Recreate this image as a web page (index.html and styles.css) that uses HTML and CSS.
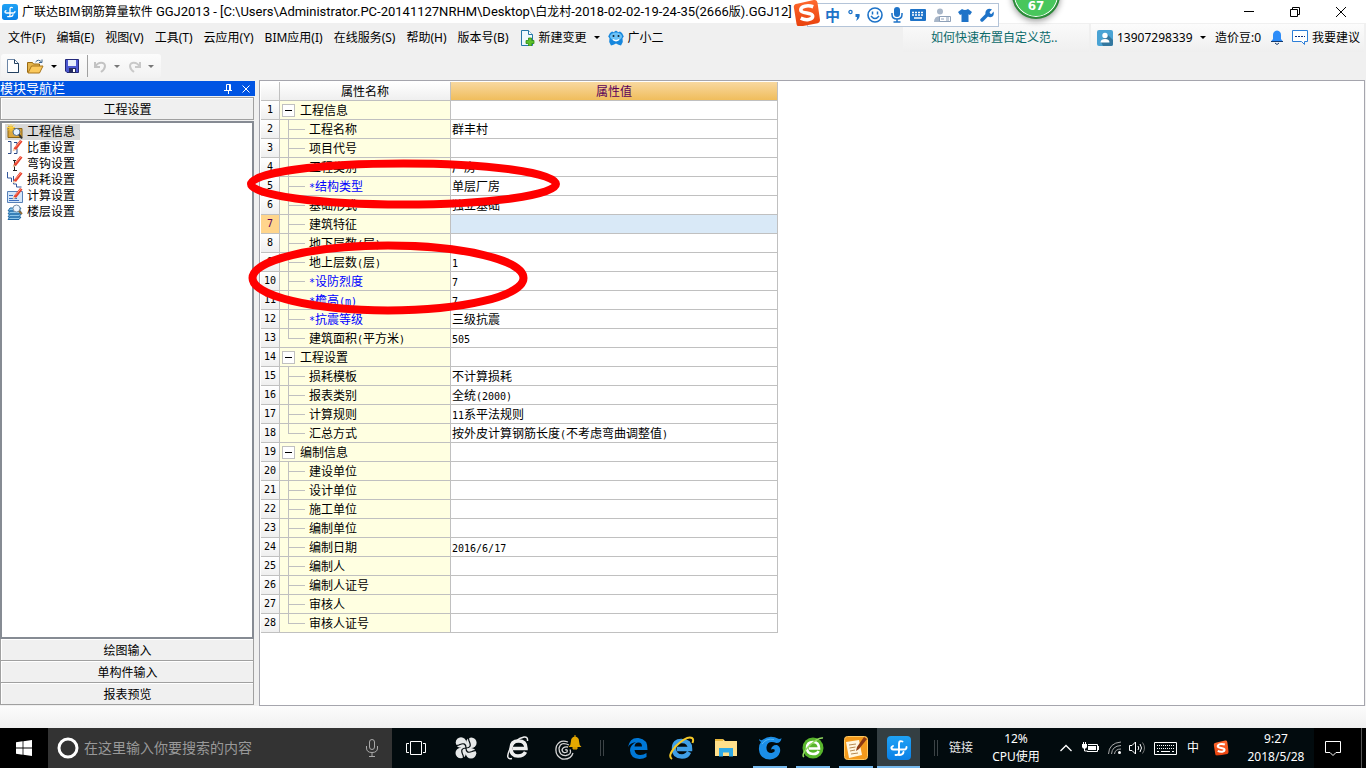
FILE: index.html
```
<!DOCTYPE html>
<html lang="zh-CN">
<head>
<meta charset="utf-8">
<title>广联达BIM钢筋算量软件 GGJ2013</title>
<link rel="stylesheet" href="styles.css">
</head>
<body>
<svg class="defs" width="0" height="0" aria-hidden="true">
  <defs>
    <linearGradient id="blueTile" x1="0" y1="0" x2="0" y2="1"><stop offset="0" stop-color="#1fa2f5"/><stop offset="1" stop-color="#0a80e6"/></linearGradient>
    <linearGradient id="sogou" x1="0" y1="0" x2="0" y2="1"><stop offset="0" stop-color="#ff6a30"/><stop offset="1" stop-color="#e8400c"/></linearGradient>
    <symbol id="ggj" viewBox="0 0 24 24">
      <rect width="24" height="24" rx="4" fill="url(#blueTile)"/>
      <path d="M15.500 5.500Q12 4 12 8v8q0 3.500-3.500 3M6 10q-2 1-1.500 2.500.5 1 2 1h11q2 0 2-2.500M12 19q4 0 4.500-3" fill="none" stroke="#fff" stroke-width="1.900" stroke-linecap="round"/>
    </symbol>
    <symbol id="sg" viewBox="0 0 26 26">
      <path d="M4 4.500 20 1q3-.5 3.600 2.400L26 20q.3 2.800-2.300 3.500L7 26.500Q4 27 3.400 24L.8 8Q.4 5 4 4.500z" fill="url(#sogou)"/>
      <path d="M19.500 7.500C14 5.500 7.500 7 7.500 10.500c0 4 11.500 2 11.500 6 0 3.500-6.500 4.500-11.500 2" fill="none" stroke="#fff" stroke-width="3.400"/>
    </symbol>
    <symbol id="pencil" viewBox="0 0 16 16"><path d="M6.500 8.500 13 0l2.500 1.500L9 10z" fill="#e8402c"/><path d="m8.300 7.300 5.500-6.500" stroke="#ff9a80"/><path d="m6.500 8.500-1 3L9 10z" fill="#f2c9a0"/></symbol>
  </defs>
</svg>

<header class="titlebar">
  <svg class="i16" viewBox="0 0 24 24"><use href="#ggj"/></svg>
  <h1 class="title">广联达BIM钢筋算量软件 <span>GGJ2013 - [C:\Users\Administrator.PC-20141127NRHM\Desktop\</span>白龙村<span>-2018-02-02-19-24-35(2666</span>版<span>).GGJ12]</span></h1>
  <div class="winbtns">
    <button aria-label="最小化"><svg width="12" height="12"><path d="M1 5.500h10" stroke="#000"/></svg></button>
    <button aria-label="还原"><svg width="12" height="12"><path d="M1.500 3.500h7v7h-7zM3.500 3.500v-2h7v7h-2" fill="none" stroke="#000"/></svg></button>
    <button aria-label="关闭"><svg width="12" height="12"><path d="m1 1 10 10M11 1 1 11" stroke="#000"/></svg></button>
  </div>
</header>

<nav class="menubar">
  <button>文件(F)</button><button>编辑(E)</button><button>视图(V)</button><button>工具(T)</button><button>云应用(Y)</button><button>BIM应用(I)</button><button>在线服务(S)</button><button>帮助(H)</button><button>版本号(B)</button>
  <button class="withicon"><svg width="15" height="16" viewBox="0 0 15 16"><path d="M1.500.5h7l4 4v11h-11z" fill="#eef8fd" stroke="#2477a8"/><path d="M8.500.5v4h4" fill="#fff" stroke="#2477a8"/><path d="M8.500 8h3v2.500H14v3h-2.500V16h-3v-2.500H6v-3h2.500z" fill="#5cc02a" stroke="#2f8a10" stroke-width=".8"/></svg><span>新建变更</span><i class="caret"></i></button>
  <button class="withicon"><svg width="16" height="16" viewBox="0 0 16 16"><path d="M2 3 4 1.500l2 .7Q8-.5 10 2.200l2-.7L14 3l1.800 3.500-1.300 1.800.3 3.700-1.800 3.500-2.500-.8-2.500-1.200-2.500 1.200-2.500.8L1.200 12l.3-3.700L.2 6.500z" fill="#1787dd"/><ellipse cx="8" cy="6.500" rx="6" ry="4" fill="#6cc2f6"/><circle cx="5.500" cy="6" r="1" fill="#123"/><circle cx="10.500" cy="6" r="1" fill="#123"/><path d="M5 9.500q3 2.500 6 0" stroke="#fff" stroke-width="1.300" fill="none"/></svg><span>广小二</span></button>
  <a class="tip" href="#">如何快速布置自定义范..</a>
  <div class="account">
    <button class="user"><svg width="16" height="16" viewBox="0 0 16 16"><rect width="16" height="16" rx="2" fill="#4aa3d4"/><path d="m10 4 6 6v4q0 2-2 2H6l-2-4z" fill="#34789f"/><circle cx="8" cy="5.500" r="2.700" fill="#fff"/><path d="M3.500 12.500q0-3.500 4.500-3.500t4.500 3.500z" fill="#fff"/></svg><span>13907298339</span><i class="caret"></i></button>
    <span>造价豆:0</span>
    <button class="bell" aria-label="通知"><svg width="12" height="15" viewBox="0 0 12 15"><path d="M0 11.500 2 9V5q0-4 4-4.500 4 .5 4 4.500v4l2 2.500z" fill="#2d8cf8"/><path d="M0 11.500h12M4 13l2 1.500L8 13" fill="none" stroke="#123a70"/></svg></button>
    <button class="suggest"><svg width="16" height="16" viewBox="0 0 16 16"><path d="M.5.500h15v11h-3v3l-3-3h-9z" fill="#fff" stroke="#2d7fd8"/><path d="M3 6.500h10" stroke="#0a2f80" stroke-dasharray="2 1"/></svg><span>我要建议</span></button>
  </div>
</nav>

<div class="toolbar">
  <div class="tools">
    <button aria-label="新建"><svg width="12" height="14" viewBox="0 0 12 14"><path d="M.5.5h7l4 4v9H.5z" fill="#fff" stroke="#6c86a6"/><path d="M7.500.5v4h4v9H.5" fill="none" stroke="#23405f"/></svg></button>
    <button class="open" aria-label="打开"><svg width="17" height="15" viewBox="0 0 17 15"><path d="M.5 13.500v-10h5l1 1.500h6v3" fill="#e5b54c" stroke="#9a6a12"/><path d="m1 14 3.500-7H16l-3.500 7z" fill="#fbc95c" stroke="#a8741a"/><path d="M8.500 3q3-3.500 6 0M15 .5v3h-3" fill="none" stroke="#3d6690"/></svg><i class="caret"></i></button>
    <button aria-label="保存"><svg width="14" height="14" viewBox="0 0 14 14"><path d="M.5.5h13v13H2l-1.500-1.500z" fill="#4c58d0" stroke="#23287a"/><path d="M3 1h8v6H3z" fill="#e8effc"/><path d="M4 9h7v5H4z" fill="#242a60"/><path d="M8 10h2v3H8z" fill="#fff"/></svg></button>
    <span class="rule"></span>
    <button disabled aria-label="撤销"><svg width="13" height="13" viewBox="0 0 13 13"><path d="M1 2v5h5M1.500 6.500C4 1.500 11 1.500 11 6q0 3-4 6" fill="none" stroke="#c3c3c3" stroke-width="2"/></svg><i class="caret dim"></i></button>
    <button disabled aria-label="恢复"><svg width="13" height="13" viewBox="0 0 13 13"><path d="M12 2v5H7M11.500 6.500C9 1.500 2 1.500 2 6q0 3 4 6" fill="none" stroke="#c9c9c9" stroke-width="2"/></svg><i class="caret dim"></i></button>
  </div>
</div>

<main class="work">
  <aside class="side">
    <div class="sidehead"><h2>模块导航栏</h2>
      <button aria-label="固定"><svg width="8" height="10"><path d="M2.500 6V.5h4V6M5.500 1v5M0 6.500h8M4.500 7v3" stroke="#fff" fill="none"/></svg></button>
      <button aria-label="关闭"><svg width="8" height="8"><path d="m.5.5 7 7M7.500.5l-7 7" stroke="#fff"/></svg></button>
    </div>
    <button class="group">工程设置</button>
    <div class="modules">
      <button class="mod on"><svg viewBox="0 0 16 16"><path d="M1 13.500V3h5l1 1.500h8v9z" fill="#dca63c" stroke="#8a6414"/><circle cx="9.500" cy="8" r="3.500" fill="#e8f3ff" stroke="#4d6b8c"/><path d="m12 10.500 3 4" stroke="#333" stroke-width="2"/><path d="M4-.5v8M0 3.500h8M1 .5l6 6M7 .5l-6 6" stroke="#ffd23c"/></svg><span>工程信息</span></button>
      <button class="mod"><svg viewBox="0 0 16 16"><path d="M1 1.500h3v12H1M7 2.500h3v5M7 13.500h3v-5" fill="none" stroke="#2c4a86"/><use href="#pencil"/></svg><span>比重设置</span></button>
      <button class="mod"><svg viewBox="0 0 16 16"><path d="M6 4.500h3M7.500 4.500v10M6 14.500h4M6 9.500h3" fill="none" stroke="#222"/><use href="#pencil"/></svg><span>弯钩设置</span></button>
      <button class="mod"><svg viewBox="0 0 16 16"><path d="M.5 0v6h4v4M6.500 4v8h3v3h5" fill="none" stroke="#34589c"/><use href="#pencil"/></svg><span>损耗设置</span></button>
      <button class="mod"><svg viewBox="0 0 16 16"><path d="M.5 3.500h15v11H.5z" fill="#d4e7fa" stroke="#5780b8"/><path d="M2 7.500h4M2 10.500h8M2 12.500h10" stroke="#3d6fc0"/><use href="#pencil"/></svg><span>计算设置</span></button>
      <button class="mod"><svg viewBox="0 0 16 16"><path d="M3 4h11l-2 3H1zM3 7h11l-2 3H1zM3 10h11l-2 3H1zM3 13h11l-2 2.500H1z" fill="#8cc6ea" stroke="#1f6aa8"/><circle cx="9.500" cy="4.500" r="3.500" fill="#eef6ff" stroke="#7890a8"/><path d="m12 7 3 3" stroke="#8a6a3a" stroke-width="2"/></svg><span>楼层设置</span></button>
    </div>
    <button class="group low">绘图输入</button>
    <button class="group low">单构件输入</button>
    <button class="group low">报表预览</button>
  </aside>

  <section class="sheet">
    <table class="props">
      <colgroup><col class="c1"><col class="c2"><col class="c3"></colgroup>
      <thead><tr><th></th><th>属性名称</th><th class="cur">属性值</th></tr></thead>
      <tbody>
        <tr><th>1</th><td class="top"><button class="fold" aria-label="折叠"></button>工程信息</td><td></td></tr>
        <tr><th>2</th><td>工程名称</td><td>群丰村</td></tr>
        <tr><th>3</th><td>项目代号</td><td></td></tr>
        <tr><th>4</th><td>工程类别</td><td>厂房</td></tr>
        <tr><th>5</th><td class="key"><b>*</b>结构类型</td><td>单层厂房</td></tr>
        <tr><th>6</th><td>基础形式</td><td>独立基础</td></tr>
        <tr class="sel"><th>7</th><td>建筑特征</td><td></td></tr>
        <tr><th>8</th><td>地下层数<b>(</b>层<b>)</b></td><td></td></tr>
        <tr><th>9</th><td>地上层数<b>(</b>层<b>)</b></td><td><b>1</b></td></tr>
        <tr><th>10</th><td class="key"><b>*</b>设防烈度</td><td><b>7</b></td></tr>
        <tr><th>11</th><td class="key"><b>*</b>檐高<b>(m)</b></td><td><b>7</b></td></tr>
        <tr><th>12</th><td class="key"><b>*</b>抗震等级</td><td>三级抗震</td></tr>
        <tr><th>13</th><td class="last">建筑面积<b>(</b>平方米<b>)</b></td><td><b>505</b></td></tr>
        <tr><th>14</th><td class="top"><button class="fold" aria-label="折叠"></button>工程设置</td><td></td></tr>
        <tr><th>15</th><td>损耗模板</td><td>不计算损耗</td></tr>
        <tr><th>16</th><td>报表类别</td><td>全统<b>(2000)</b></td></tr>
        <tr><th>17</th><td>计算规则</td><td><b>11</b>系平法规则</td></tr>
        <tr><th>18</th><td class="last">汇总方式</td><td>按外皮计算钢筋长度<b>(</b>不考虑弯曲调整值<b>)</b></td></tr>
        <tr><th>19</th><td class="top"><button class="fold" aria-label="折叠"></button>编制信息</td><td></td></tr>
        <tr><th>20</th><td>建设单位</td><td></td></tr>
        <tr><th>21</th><td>设计单位</td><td></td></tr>
        <tr><th>22</th><td>施工单位</td><td></td></tr>
        <tr><th>23</th><td>编制单位</td><td></td></tr>
        <tr><th>24</th><td>编制日期</td><td><b>2016/6/17</b></td></tr>
        <tr><th>25</th><td>编制人</td><td></td></tr>
        <tr><th>26</th><td>编制人证号</td><td></td></tr>
        <tr><th>27</th><td>审核人</td><td></td></tr>
        <tr><th>28</th><td class="last">审核人证号</td><td></td></tr>
      </tbody>
    </table>
    <svg class="marks" width="340" height="250" viewBox="-20 0 340 250"><g fill="none" stroke="#f00" stroke-width="8"><ellipse cx="143.500" cy="103" rx="152.500" ry="20.500"/><ellipse cx="128" cy="197" rx="135.500" ry="32.500"/></g></svg>
  </section>
</main>
<div class="status"></div>

<footer class="taskbar">
  <button class="start" aria-label="开始"><svg width="16" height="16" viewBox="0 0 16 16"><path d="M0 2.200 6.600 1.300v6.300H0zM7.400 1.200 16 0v7.600H7.400zM0 8.400h6.600v6.300L0 13.800zM7.400 8.400H16V16l-8.600-1.200z" fill="#fff"/></svg></button>
  <label class="search"><svg width="22" height="22"><circle cx="11" cy="11" r="9" fill="none" stroke="#fff" stroke-width="3"/></svg><input type="text" placeholder="在这里输入你要搜索的内容"><svg width="12" height="18" viewBox="0 0 12 18"><rect x="3.500" y=".5" width="5" height="10" rx="2.500" fill="none" stroke="#aaa"/><path d="M.5 7v2q0 4.500 5.500 4.500T11.500 9V7M6 13.500V17M3 17.500h6" fill="none" stroke="#aaa"/></svg></label>
  <button class="w48" aria-label="任务视图"><svg width="20" height="14" viewBox="0 0 20 14"><path d="M4.500.5h11v13h-11zM3 2.500H.5v9H3M17 2.500h2.500v9H17" fill="none" stroke="#fff"/></svg></button>
  <button class="w52" aria-label="风扇"><svg width="22" height="22" viewBox="0 0 22 22"><g fill="#e6e8e8"><circle cx="6" cy="5.500" r="5.300"/><circle cx="16.300" cy="5.800" r="5.300"/><circle cx="16" cy="16.300" r="5.300"/><circle cx="5.800" cy="16" r="5.300"/><path d="M6 6h10v10H6z"/></g><path d="M11 11Q11 5 5 7.500q-3 1.500-5 .500M11 11q6 0 3.500-6-1.500-3-.5-5M11 11q0 6 6 3.500 3-1.500 5-.5M11 11q-6 0-3.500 6 1.500 3 .5 5" fill="none" stroke="#02090c" stroke-width="1.200"/></svg></button>
  <button class="w52" aria-label="浏览器"><svg width="22" height="24" viewBox="0 0 22 24"><path d="M18.500 16q-2 4-7.500 4-7 0-7-7.500T11.500 5Q19 5 19 12.500H6" fill="none" stroke="#eee" stroke-width="3.500"/><path d="M5 22.500Q-2 24 2.500 14 8 3 17 1q4-.5 3.500 4" fill="none" stroke="#eee" stroke-width="1.500"/></svg></button>
  <button class="w48" aria-label="提醒"><svg width="28" height="26" viewBox="0 0 28 26"><path d="M14 7Q6 4 2.500 11 0 20 8 24q9 1 11-6M15 10Q7 6 5 13q0 8 7 7.500 6-1 4-6M14 12q-5-1-6 3 1 4 5 2 1-3-2-2" fill="none" stroke="#d6d6d6" stroke-width="1.300"/><path d="M14.500 12Q17 10 17 6q0-4 4-4.500 4 .5 4 4.500 0 4 2.500 6z" fill="#e6a800"/><path d="M21 0v2M19 12h4v2h-4z" fill="#c48600" stroke="#e6a800"/></svg></button>
  <span class="grip"></span>
  <button class="w44" aria-label="Edge"><svg width="22" height="22" viewBox="0 0 22 22"><path d="M1 10Q3 0 11.500 1 21 2 20.500 13H7.500q.5 5 6 5 3 0 6-2v4q-3 2-7 2-9-.5-9.500-8.500Q3 8 9 5 3 6 1 10zm6.500-.5h7.500q0-4-3.500-4t-4 4z" fill="#0078d7"/></svg></button>
  <button class="w44" aria-label="Internet Explorer"><svg width="26" height="24" viewBox="0 0 26 24"><path d="M20 16q-2 4.500-7 4.500-8 0-8-8T13 5q8 0 8 8H8" fill="none" stroke="#3f9fe6" stroke-width="4.500"/><path d="M3 23Q-2 20 7 10 18-.5 23 2q2 1 .5 5" fill="none" stroke="#f5c928" stroke-width="2"/></svg></button>
  <button class="w44" aria-label="文件资源管理器"><svg width="22" height="20" viewBox="0 0 22 20"><path d="M0 18V1h8l2 2h12v15z" fill="#ffe08a"/><path d="M0 1h8v2H0z" fill="#e8b73c"/><path d="M4 18.500V10h14v8.500h-4v-4H8v4z" fill="#2eaae6"/></svg></button>
  <button class="w43 run" aria-label="广联达"><svg width="24" height="24" viewBox="0 0 24 24"><path d="M1 3q2 2 4 .500Q12-1.500 21 3q2 0 2.500-1-.5 5-5 5-9-3-10 4-.5 6 5 6 4-.5 3-3.500-1.500-1-3.500 0 1-5 6-4.500 4 2 3 7-2 7-10 7.500Q2 23 1 14 .5 9 3 6 1 5 1 3z" fill="#1b8ee8"/><path d="M4 8q4-6 12-4.500" fill="none" stroke="#56b8f6"/></svg></button>
  <button class="w43 run" aria-label="安全浏览器"><svg width="24" height="24" viewBox="0 0 24 24"><circle cx="12" cy="12" r="10.500" fill="#58b52c"/><path d="M17.500 15q-1 3-5.500 3-6 0-6-6t6-6q6 0 6 6.500H8" fill="none" stroke="#fff" stroke-width="2.600"/><path d="M3 21Q0 19 7 11 17 1 22 2" fill="none" stroke="#92dc60" stroke-width="1.500"/></svg></button>
  <button class="w43 run" aria-label="记事"><svg width="24" height="24" viewBox="0 0 24 24"><rect x=".5" y=".5" width="23" height="23" rx="3" fill="#f39a1c" stroke="#ffc860"/><path d="m2 6 13-2 3 15-13 3z" fill="#fff6df"/><path d="m5 9 7-1M5.500 12l6-1M6 15l5-1M7 18l7-1" stroke="#b98a50"/><path d="m12 15 1-4 7-10 3 2-8 10z" fill="#8d3a12"/></svg></button>
  <button class="w43 run active" aria-label="GGJ2013"><svg width="24" height="24"><use href="#ggj"/></svg></button>
  <div class="tray">
    <span class="grip"></span>
    <span class="links">链接</span>
    <div class="cpu"><span>12%</span><span>CPU使用</span></div>
    <button class="w20" aria-label="显示隐藏的图标"><svg width="12" height="8"><path d="m.5 7 5.500-5.500L11.500 7" fill="none" stroke="#fff" stroke-width="1.300"/></svg></button>
    <button class="w28" aria-label="电源"><svg width="17" height="12" viewBox="0 0 17 12"><path d="M6 2.500h9.500v7H5M1.500 0v3M3.500 0v3M2.500 6v3h3" fill="none" stroke="#fff"/><path d="M0 2h5v3L4 6.500H1L0 5zM6 4h8v4H6zM16 4h1v4h-1z" fill="#fff"/></svg></button>
    <button class="w22" aria-label="网络"><svg width="14" height="14" viewBox="0 0 14 14"><g fill="none" stroke="#aaa"><path d="M.5 13Q1 2 13 1M3.500 13Q4 5 13 4.500M6.500 13q.5-5 6.500-5" /></g><circle cx="11.500" cy="11.500" r="1.500" fill="#fff"/></svg></button>
    <button class="w22" aria-label="音量"><svg width="16" height="14" viewBox="0 0 16 14"><path d="M.5 4.500H3l3.500-3.500v12L3 9.500H.5zM9 5q1.500 2 0 4M11 3q3 4 0 8" fill="none" stroke="#fff"/><path d="M13.500 1.500q4 5.500 0 11" fill="none" stroke="#777"/></svg></button>
    <button class="w34" aria-label="触摸键盘"><svg width="23" height="13" viewBox="0 0 23 13"><path d="M.5.5h22v12H.5z" fill="none" stroke="#fff"/><path d="M3 3.500h17M3 6.500h17" stroke="#fff" stroke-dasharray="1 1"/><path d="M3 9.500h2M7 9.500h9M18 9.500h2" stroke="#fff"/></svg></button>
    <button class="w22 ime">中</button>
    <button class="w34" aria-label="搜狗输入法"><svg width="16" height="16" viewBox="0 0 26 27"><use href="#sg" width="26" height="26"/></svg></button>
    <div class="clock"><span>9:27</span><span>2018/5/28</span></div>
    <button class="note" aria-label="操作中心"><svg width="16" height="17" viewBox="0 0 16 17"><path d="M.5 1.500h15v11H11L8 15.500 5 12.500H.5z" fill="none" stroke="#fff"/></svg></button>
    <span class="peek"></span>
  </div>
</footer>

<div class="imebar">
  <svg class="logo" width="28" height="28" viewBox="0 0 27 27"><use href="#sg" width="26" height="26"/></svg>
  <button class="cn">中</button>
  <button aria-label="标点"><svg width="12" height="12" viewBox="0 0 12 12"><circle cx="2.500" cy="3" r="1.600" fill="none" stroke="#1e73c8" stroke-width="1.300"/><path d="M7.500 5h4q1 4-3.500 7 1-2 1-4H7.500z" fill="#1e73c8"/></svg></button>
  <button aria-label="表情"><svg width="16" height="16"><circle cx="8" cy="8" r="7" fill="none" stroke="#1e73c8" stroke-width="1.600"/><path d="M5.500 4.500v3M10.500 4.500v3M4 9q4 5 8 0" fill="none" stroke="#1e73c8" stroke-width="1.500"/></svg></button>
  <button aria-label="语音"><svg width="12" height="16"><rect x="3" width="6" height="10" rx="3" fill="#1e73c8"/><path d="M1 6v1.500Q1 12 6 12t5-4.500V6M6 12v3M2.500 15h7" fill="none" stroke="#1e73c8" stroke-width="1.500"/></svg></button>
  <button aria-label="键盘"><svg width="16" height="12"><rect width="16" height="12" rx="1" fill="#1e73c8"/><path d="M2 3.500h12M2 6h12" stroke="#fff" stroke-width="1.500" stroke-dasharray="2 1"/><path d="M4 9h8" stroke="#fff" stroke-width="1.500"/></svg></button>
  <button aria-label="账户"><svg width="17" height="15"><circle cx="6" cy="3.500" r="3" fill="#a8b6c8"/><path d="M0 14q0-6 6-6t6 3v3z" fill="#a8b6c8"/><path d="M5.500 8.500h11v5h-11z" fill="#fff" stroke="#8ea0b8"/><path d="M7 11h3M12 10h3M12 12h3" stroke="#8ea0b8"/></svg></button>
  <button aria-label="皮肤"><svg width="14" height="13"><path d="M4 0q3 2 6 0l4 3-2 3-1.500-.8V13h-7V5.200L2 6 0 3z" fill="#1e73c8"/></svg></button>
  <button aria-label="工具"><svg width="14" height="14"><path d="M2 12 8 6" stroke="#1e73c8" stroke-width="3.500" stroke-linecap="round"/><path d="M12 1.500 9.500 4l.5 1.500 1.500.5L13.500 3.500q1 3-1 5-2.500 1.500-4.500 0L5.500 6Q5 3 7 1.500q2-1.500 5 0z" fill="#1e73c8"/></svg></button>
</div>
<div class="ball"><span>67</span></div>
</body>
</html>
```
FILE: styles.css
```
* { box-sizing: border-box; }
body {
  margin: 0;
  height: 100vh;
  display: flex;
  flex-direction: column;
  overflow: hidden;
  position: relative;
  background: #f0f0f0;
  color: #000;
  font: 12px/16px "Noto Sans", "Noto Sans CJK SC", sans-serif;
}
button {
  display: flex;
  align-items: center;
  justify-content: center;
  margin: 0;
  padding: 0;
  border: 0;
  background: none;
  color: inherit;
  font: inherit;
  white-space: nowrap;
}
svg { flex: none; display: block; }
h1, h2 { margin: 0; font: inherit; white-space: nowrap; }
.defs { position: absolute; }
.i16 { width: 16px; height: 16px; }
.caret { border: 3px solid transparent; border-top-color: #000; border-bottom: 0; }
.caret.dim { border-top-color: #777; }

.titlebar { display: flex; align-items: center; flex: none; height: 23px; padding-left: 2px; gap: 4px; background: #fff; }
.title { flex: 1; }
.title span { font-family: Roboto, sans-serif; font-size: 13px; }
.winbtns { display: flex; padding-right: 2px; }
.winbtns button { width: 46px; height: 20px; }

.menubar { display: flex; align-items: center; flex: none; height: 29px; padding: 0 2px 0 8px; gap: 11px; white-space: nowrap; }
.withicon { gap: 4px; }
.withicon .caret { margin: 0 -3px 0 3px; }
.tip {
  margin-left: auto;
  width: 186px;
  height: 28px;
  padding-left: 28px;
  line-height: 28px;
  color: #0a6a6a;
  text-decoration: none;
  background: linear-gradient(#fafafa, #efefef);
}
.account { display: flex; align-items: center; height: 28px; width: 273px; margin-left: -9px; padding: 0 4px 0 6px; justify-content: space-between; background: linear-gradient(#fcfcfc, #efefef); }
.user, .suggest { gap: 4px; }
.user .caret { margin-left: 3px; }

.toolbar { flex: none; height: 28px; padding: 2px 1px; }
.tools { display: flex; align-items: center; width: 160px; height: 24px; padding-left: 6px; gap: 8px; border-radius: 3px; background: linear-gradient(#fcfcfc, #f2f2f2); }
.tools button { gap: 7px; }
.rule { width: 1px; height: 22px; margin-right: -2px; background: #a0a0a0; }

.work { flex: 1; min-height: 0; display: flex; gap: 4px; padding-right: 1px; font-family: "Liberation Sans", "Noto Sans CJK SC", sans-serif; }
.side { display: flex; flex-direction: column; flex: none; width: 255px; padding: 1px 0; }
.sidehead { display: flex; align-items: center; flex: none; height: 15px; gap: 10px; padding-right: 5px; background: #0054e3; color: #fff; line-height: 15px; }
.sidehead h2 { flex: 1; font-size: 13px; }
.group { flex: none; height: 23px; margin: 1px 1px 0 0; padding: 2px 0 0 1px; border: 1px solid #a0a0a0; box-shadow: inset 1px 1px #fff; background: #f0f0f0; }
.low { height: 22px; margin-top: 0; border-top: 0; }
.modules { flex: 1; min-height: 0; display: flex; flex-direction: column; align-items: flex-start; margin: 1px 1px 0 0; padding: 1px 3px; border: 2px solid #868b93; background: #fff; }
.mod { height: 16px; padding: 0 5px 0 2px; gap: 4px; }
.mod svg { width: 16px; height: 16px; }
.mod.on { background: #d8d8d8; }

.sheet { position: relative; flex: 1; min-width: 0; padding: 1px; border: 1px solid #a5a5ad; background: #fff; }
.marks { position: absolute; top: 0; left: -20px; }
.props { width: 517px; table-layout: fixed; border-collapse: separate; border-spacing: 0; line-height: 16px; }
.c1 { width: 19px; }
.c2 { width: 171px; }
.props tr { height: 19px; }
.props th, .props td { height: 19px; padding: 0; border: solid #c0c0c0; border-width: 0 1px 1px 0; font-weight: normal; white-space: nowrap; }
.props th { background: linear-gradient(#fff, #efefef); }
.props thead th { padding-top: 2px; }
.props tbody th { font: 10px/14px "DejaVu Sans Mono", monospace; }
.props b { font: 10px/14px "DejaVu Sans Mono", monospace; }
.props td:last-child { padding: 1px 0 0 1px; background: #fff; }
.props td:nth-child(2) {
  padding: 2px 0 0 29px;
  background:
    linear-gradient(#c0c0c0, #c0c0c0) 8px 0 / 1px 100% no-repeat,
    linear-gradient(#c0c0c0, #c0c0c0) 8px 9px / 17px 1px no-repeat,
    #ffffe1;
}
.props td.last:nth-child(2) {
  background:
    linear-gradient(#c0c0c0, #c0c0c0) 8px 0 / 1px 9px no-repeat,
    linear-gradient(#c0c0c0, #c0c0c0) 8px 9px / 17px 1px no-repeat,
    #ffffe1;
}
.props td.top:nth-child(2) { padding-left: 2px; background: #ffffe1; }
.props td.key { color: #00f; }
.props th.cur { color: #5a005a; background: linear-gradient(#f8d8a0, #f0bd5c); }
.props .sel th { color: #5a005a; background: #ffd58c; }
.props .sel td:last-child { background: #d9e9f7; }
.fold {
  display: inline-block;
  width: 13px;
  height: 13px;
  margin: -2px 5px 0 0;
  vertical-align: middle;
  border: 1px solid #c0c0c0;
  background: linear-gradient(#000, #000) center / 7px 1px no-repeat #fff;
}

.status { flex: none; height: 22px; background: linear-gradient(#fcfcfc, #f0f0f0); }

.taskbar { display: flex; flex: none; height: 40px; background: #020b0e; color: #fff; }
.start { width: 48px; background: #000; }
.search { display: flex; align-items: center; width: 344px; padding: 0 14px 0 9px; gap: 5px; background: #333; }
.search input { flex: 1; min-width: 0; padding: 0; border: 0; background: none; color: #fff; font: 14px/20px "Noto Sans", "Noto Sans CJK SC", sans-serif; }
.search input::placeholder { color: #999; opacity: 1; }
.w20 { width: 20px; }
.w22 { width: 22px; }
.w28 { width: 28px; }
.w34 { width: 34px; }
.w43 { width: 43px; }
.w44 { width: 44px; }
.w48 { width: 48px; }
.w52 { width: 52px; }
.run { background: linear-gradient(#76b9ed, #76b9ed) center bottom / 34px 2px no-repeat; }
.run.active { background: linear-gradient(#76b9ed, #76b9ed) center bottom / 100% 2px no-repeat #343f43; }
.grip { align-self: center; width: 4px; height: 16px; margin: 0 12px 0 8px; border: solid #3c4346; border-width: 0 1px; }
.tray { display: flex; align-items: stretch; margin-left: auto; }
.tray .grip { margin: 0 8px 0 4px; }
.links { width: 30px; padding-left: 3px; align-self: center; color: #e8e8e8; }
.cpu, .clock { display: flex; flex-direction: column; align-items: center; justify-content: center; width: 80px; line-height: 18px; }
.clock { width: 76px; }
.note { width: 38px; background: #000; }
.peek { width: 14px; background: linear-gradient(#555, #555) 9px 0 / 1px 100% no-repeat #000; }

.imebar { position: absolute; top: 3px; left: 807px; display: flex; align-items: center; justify-content: space-between; width: 192px; height: 24px; padding: 0 4px 0 17px; border: 1px solid #b4c4d8; background: #fff; color: #1e73c8; }
.imebar .logo { position: absolute; left: -15px; top: -5px; }
.cn { font-size: 15px; font-weight: bold; }
.ball { position: absolute; top: -29px; left: 1012px; width: 48px; height: 48px; border: 2px solid #2d8a3a; border-radius: 50%; background: #48c65c; box-shadow: inset 0 0 0 1px #fff, 0 2px 6px #0006; display: flex; justify-content: center; align-items: flex-end; padding-bottom: 2px; color: #fff; font: bold 12px/18px "DejaVu Sans", sans-serif; }
```
